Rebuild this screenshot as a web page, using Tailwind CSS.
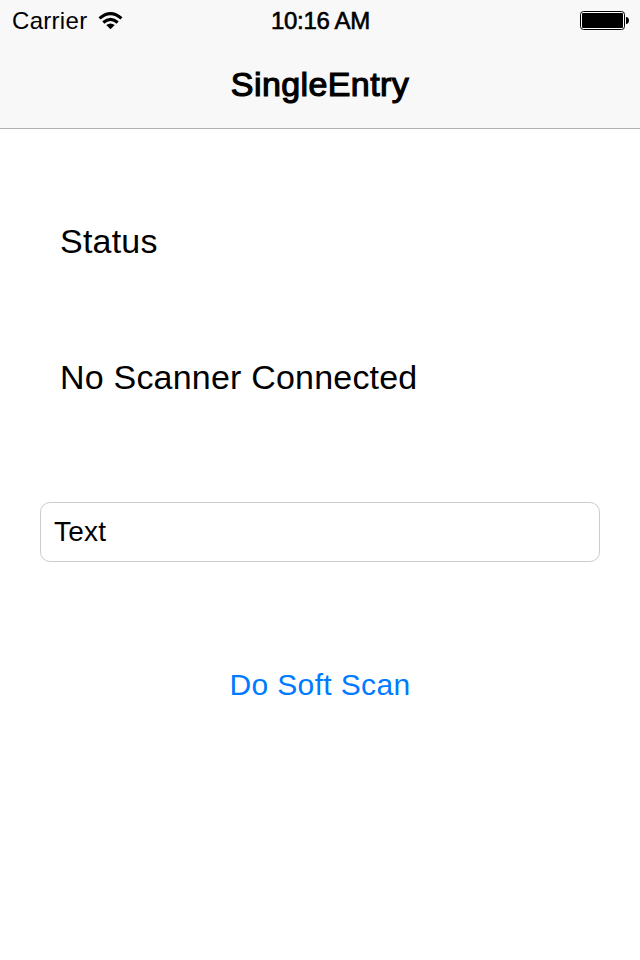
<!DOCTYPE html>
<html lang="en">
<head>
<meta charset="utf-8">
<title>SingleEntry</title>
<script src="https://cdn.jsdelivr.net/npm/@tailwindcss/browser@4"></script>
</head>
<body class="bg-white">
<div class="flex h-[960px] w-[640px] flex-col overflow-hidden bg-white font-['Liberation_Sans',sans-serif] text-black">
  <header class="flex h-[129px] flex-col border-b border-[#b2b2b2] bg-[#f8f8f8]">
    <div class="grid h-10 grid-cols-3 items-center pl-3 pr-[11px]">
      <div class="flex items-center gap-[11px]">
        <span class="pt-0.5 text-[24px] leading-[38px] tracking-[0.3px]">Carrier</span>
        <svg class="h-[19px] w-[25px]" viewBox="0 0 26 19" fill="none" stroke="#000" stroke-width="3.2">
          <path d="M1.6 7.3Q13-2.8 24.4 7.3"/>
          <path d="M5.5 11.6Q13 5 20.5 11.6"/>
          <path d="M8.6 14.3Q13 10.8 17.4 14.3L13 18.6Z" fill="#000" stroke="none"/>
        </svg>
      </div>
      <span class="whitespace-nowrap pt-0.5 text-center text-[24px] leading-[38px] tracking-[-0.3px] [-webkit-text-stroke:0.6px_black]">10:16 AM</span>
      <svg class="h-[20px] w-[50px] justify-self-end" viewBox="0 0 50 20">
        <rect x="1.5" y="1.5" width="44" height="18" rx="3" fill="#fff" stroke="#000"/>
        <rect x="3" y="3" width="41" height="15" rx="1" fill="#000"/>
        <path d="M47 7c4 0 4 7 0 7Z" fill="#000"/>
      </svg>
    </div>
    <h1 class="flex h-[88px] items-center justify-center text-[34px] leading-[88px] tracking-[0.4px] [-webkit-text-stroke:1.2px_black]">SingleEntry</h1>
  </header>
  <main class="flex flex-col px-10">
    <p class="mt-[91px] px-5 text-[34px] leading-[42px] tracking-[0.2px]">Status</p>
    <p class="mt-[94px] px-5 text-[34px] leading-[42px] tracking-[0.2px]">No Scanner Connected</p>
    <input class="mt-[104px] h-[60px] w-[560px] rounded-[10px] border border-[#cccccc] bg-white px-[13px] text-[28px] tracking-[0.2px] outline-none" type="text" value="Text" aria-label="Text">
    <button class="mt-[102px] self-center text-[30px] leading-[42px] tracking-[0.35px] text-[#007aff]" type="button">Do Soft Scan</button>
  </main>
</div>
</body>
</html>
